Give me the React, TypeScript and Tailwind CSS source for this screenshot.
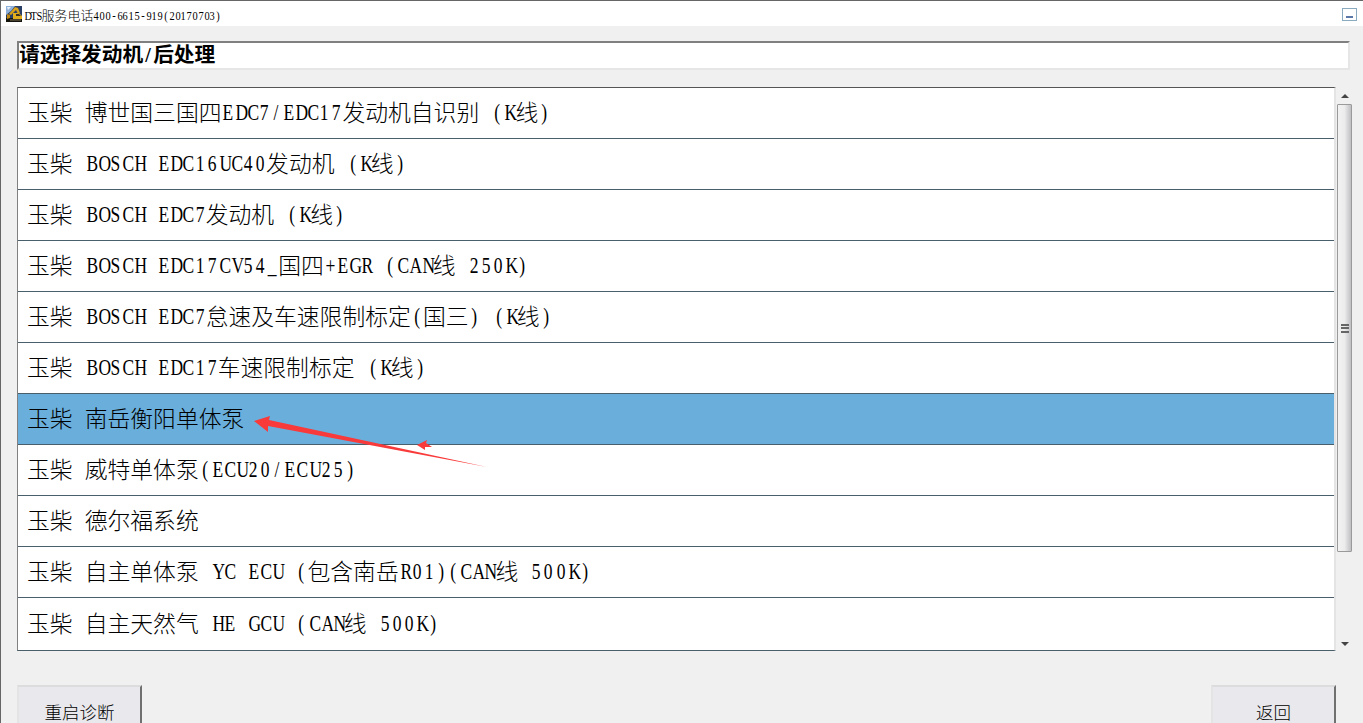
// DTS engine / aftertreatment selection screen
const rows = [
  "玉柴 博世国三国四EDC7/EDC17发动机自识别 (K线)",
  "玉柴 BOSCH EDC16UC40发动机 (K线)",
  "玉柴 BOSCH EDC7发动机 (K线)",
  "玉柴 BOSCH EDC17CV54_国四+EGR (CAN线 250K)",
  "玉柴 BOSCH EDC7怠速及车速限制标定(国三) (K线)",
  "玉柴 BOSCH EDC17车速限制标定 (K线)",
  "玉柴 南岳衡阳单体泵",
  "玉柴 威特单体泵(ECU20/ECU25)",
  "玉柴 德尔福系统",
  "玉柴 自主单体泵 YC ECU (包含南岳R01)(CAN线 500K)",
  "玉柴 自主天然气 HE GCU (CAN线 500K)",
];

// SimSun look: narrow fixed-width latin cells next to larger CJK glyphs
function Mixed({ text, latin, cjk }: { text: string; latin: string; cjk: string }) {
  const parts = text.split(/([\u4e00-\u9fff]+)/).filter(Boolean);
  return (
    <>
      {parts.map((p, i) =>
        /[\u4e00-\u9fff]/.test(p) ? (
          <span key={i} className={cjk}>{p}</span>
        ) : (
          <span key={i}>
            {p.split("").map((c, j) => (
              <span key={j} className={latin}>{c}</span>
            ))}
          </span>
        )
      )}
    </>
  );
}

function RowText({ text }: { text: string }) {
  return (
    <Mixed
      text={text}
      latin="inline-block w-[12.1px] scale-x-[0.76] text-center font-['Liberation_Serif',serif] text-[23px]"
      cjk="font-['Noto_Sans_CJK_SC',sans-serif] text-[22.8px] font-light"
    />
  );
}

function AppIcon() {
  return (
    <svg width="16" height="16" viewBox="0 0 16 16" className="shrink-0">
      <rect width="16" height="16" fill="#2a3f66" />
      <path d="M0 0h9L5 5 0 9z" fill="#8fb0d8" />
      <path d="M1 1h4L2 4z" fill="#e8eef6" />
      <rect y="12" width="16" height="4" fill="#15130e" />
      <path d="M7 7h6l3 3v3H7z" fill="#e3ac1c" />
      <path d="M9 1l3 1 2 5-2 1-2-4-5 5-2-1z" fill="#d9a018" />
      <path d="M1 8l3 1 0 3-3 1z" fill="#c08a12" />
      <path d="M10 8h3l2 2h-5z" fill="#3a3020" />
      <rect x="4" y="13" width="11" height="2" fill="#4a4230" />
    </svg>
  );
}

function Btn({ label }: { label: string }) {
  return (
    <div className="flex h-[38px] w-[125px] items-start justify-center border-l-2 border-r-2 border-t-2 border-l-[#e4e4e4] border-r-[#707070] border-t-[#dcdcdc] bg-[#e9e8ec] pt-[16px]">
      <span className="block font-['Noto_Sans_CJK_SC',sans-serif] text-[17.5px] font-light leading-[18px]">{label}</span>
    </div>
  );
}

export default function App() {
  return (
    <div className="relative h-[723px] w-[1363px] overflow-hidden border-l border-t border-[#666666] bg-[#f0f0f0] text-black">
      {/* title bar */}
      <div className="flex h-[25px] items-center bg-white pl-[5px] pr-[6px]">
        <AppIcon />
        <div className="ml-[2px] whitespace-pre leading-none">
          <Mixed
            text="DTS服务电话400-6615-919(20170703)"
            latin="inline-block w-[5.8px] scale-x-[0.8] text-center font-['Liberation_Serif',serif] text-[13px]"
            cjk="font-['Noto_Sans_CJK_SC',sans-serif] text-[13px] font-light"
          />
        </div>
        <div className="ml-auto mt-[1px] flex h-[13px] w-[15px] items-end justify-center border border-[#8aaabf] pb-[2px]">
          <div className="h-[2px] w-[7px] bg-[#5b78a8]" />
        </div>
      </div>

      <div className="pl-[16px]">
        {/* heading */}
        <div className="mt-[15px] flex h-[29px] w-[1333px] items-center border-2 border-b-[#e6e6e6] border-l-[#808080] border-r-[#e6e6e6] border-t-[#808080] bg-white pb-[4px]">
          <span className="whitespace-pre font-bold leading-none">
            <Mixed
              text="请选择发动机/后处理"
              latin="inline-block w-[10px] text-center font-['Liberation_Serif',serif] text-[20px]"
              cjk="font-['Noto_Sans_CJK_SC',sans-serif] text-[20.7px]"
            />
          </span>
        </div>

        {/* list + scrollbar */}
        <div className="mt-[17px] flex">
          <div className="h-[564px] w-[1319px] border-b border-l border-r-2 border-t border-b-[#4a5f6c] border-l-[#808080] border-r-[#e4e4e4] border-t-[#555555] bg-white">
            {rows.map((r, i) => (
              <div
                key={i}
                className={`flex h-[51px] items-center whitespace-pre border-b border-[#4a5f6c] pb-[1px] pl-[9px] leading-none last:border-b-0 ${
                  i === 6 ? "bg-[#6aafdc]" : "bg-white"
                }`}
              >
                <RowText text={r} />
              </div>
            ))}
          </div>

          <div className="ml-[1px] flex h-[565px] w-[15px] flex-col items-center bg-[#f0f0f0]">
            <div className="flex h-[17px] items-center justify-center">
              <div className="h-0 w-0 border-x-[4px] border-b-[4px] border-x-transparent border-b-[#444444]" />
            </div>
            <div className="flex h-[448px] w-[15px] items-center justify-center rounded-[1px] border border-[#9a9a9a] bg-gradient-to-r from-[#f2f2f2] via-[#ececec] to-[#c0c0c4]">
              <div className="flex h-[9px] w-[8px] flex-col justify-between">
                <div className="h-[2px] bg-[#666666]" />
                <div className="h-[2px] bg-[#666666]" />
                <div className="h-[2px] bg-[#666666]" />
              </div>
            </div>
            <div className="mt-auto flex h-[17px] items-center justify-center">
              <div className="h-0 w-0 border-x-[4px] border-t-[4px] border-x-transparent border-t-[#444444]" />
            </div>
          </div>
        </div>

        {/* bottom buttons */}
        <div className="mt-[33px] flex w-[1319px] justify-between">
          <Btn label="重启诊断" />
          <Btn label="返回" />
        </div>
      </div>

      {/* red annotation arrow drawn over the screenshot */}
      <svg className="pointer-events-none absolute left-[-1px] top-[-1px]" width="1363" height="723">
        <path d="M254 421 L270 416 L269 420 L487 467 L268 426 L268 432 Z" fill="#f93a3a" />
        <path d="M417 445 L427 440 L426 443 L432 447 L425 447 L425 450 Z" fill="#f93a3a" />
      </svg>
    </div>
  );
}
